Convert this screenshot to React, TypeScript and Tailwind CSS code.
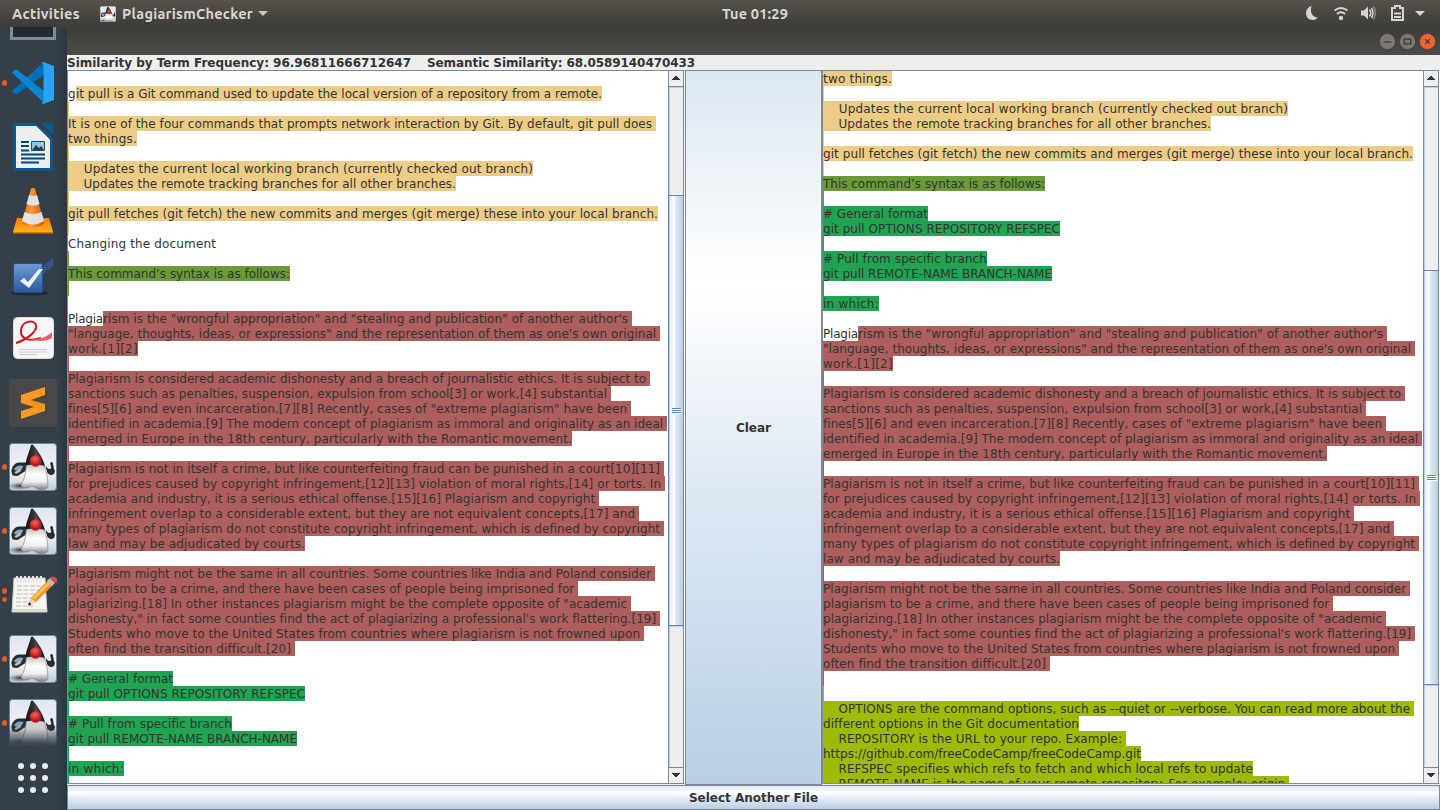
import React, { useLayoutEffect, useRef, useState } from 'react';

type Tone = 'sand' | 'moss' | 'rust' | 'green' | 'lime' | 'none';
type Line = { t: string; c: Tone; pre: string; w: number; pw: number };

const tones: Record<Tone, string> = {
  sand: 'bg-[#edcd86]',
  moss: 'bg-[#699b37]',
  rust: 'bg-[#ae5e5c]',
  green: 'bg-[#20a451]',
  lime: 'bg-[#9dba07]',
  none: '',
};

// w is the set width of the whole line, pw the width of its unmarked opening
const L = (c: Tone, w = 0, t = '', pre = '', pw = 0): Line => ({ c, t, pre, w, pw });

const updates: Line[] = [
  L('sand', 465, '    Updates the current local working branch (currently checked out branch)'),
  L('sand', 388, '    Updates the remote tracking branches for all other branches.'),
  L('sand'),
  L('sand', 590, 'git pull fetches (git fetch) the new commits and merges (git merge) these into your local branch.'),
];

const essay: Line[] = [
  L('rust', 564, 'rism is the "wrongful appropriation" and "stealing and publication" of another author\'s ', 'Plagia', 35),
  L('rust', 592, '"language, thoughts, ideas, or expressions" and the representation of them as one\'s own original '),
  L('rust', 70, 'work.[1][2]'),
  L('rust'),
  L('rust', 582, 'Plagiarism is considered academic dishonesty and a breach of journalistic ethics. It is subject to '),
  L('rust', 543, 'sanctions such as penalties, suspension, expulsion from school[3] or work,[4] substantial '),
  L('rust', 563, 'fines[5][6] and even incarceration.[7][8] Recently, cases of "extreme plagiarism" have been '),
  L('rust', 599, 'identified in academia.[9] The modern concept of plagiarism as immoral and originality as an ideal '),
  L('rust', 504, 'emerged in Europe in the 18th century, particularly with the Romantic movement.'),
  L('rust'),
  L('rust', 596, 'Plagiarism is not in itself a crime, but like counterfeiting fraud can be punished in a court[10][11] '),
  L('rust', 597, 'for prejudices caused by copyright infringement,[12][13] violation of moral rights,[14] or torts. In '),
  L('rust', 531, 'academia and industry, it is a serious ethical offense.[15][16] Plagiarism and copyright '),
  L('rust', 571, 'infringement overlap to a considerable extent, but they are not equivalent concepts,[17] and '),
  L('rust', 596, 'many types of plagiarism do not constitute copyright infringement, which is defined by copyright '),
  L('rust', 237, 'law and may be adjudicated by courts.'),
  L('rust'),
  L('rust', 587, 'Plagiarism might not be the same in all countries. Some countries like India and Poland consider '),
  L('rust', 510, 'plagiarism to be a crime, and there have been cases of people being imprisoned for '),
  L('rust', 563, 'plagiarizing.[18] In other instances plagiarism might be the complete opposite of "academic '),
  L('rust', 592, 'dishonesty," in fact some counties find the act of plagiarizing a professional\'s work flattering.[19] '),
  L('rust', 576, 'Students who move to the United States from countries where plagiarism is not frowned upon '),
  L('rust', 227, 'often find the transition difficult.[20] '),
];

const commands: Line[] = [
  L('green', 105, '# General format'),
  L('green', 237, 'git pull OPTIONS REPOSITORY REFSPEC'),
  L('green'),
  L('green', 164, '# Pull from specific branch'),
  L('green', 229, 'git pull REMOTE-NAME BRANCH-NAME'),
  L('green'),
  L('green', 56, 'in which:'),
];

const left: Line[] = [
  L('none'),
  L('sand', 534, 'it pull is a Git command used to update the local version of a repository from a remote.', 'g', 8),
  L('sand'),
  L('sand', 588, 'It is one of the four commands that prompts network interaction by Git. By default, git pull does '),
  L('sand', 69, 'two things.'),
  L('sand'),
  ...updates,
  L('sand'),
  L('none', 148, 'Changing the document'),
  L('moss'),
  L('moss', 222, 'This command’s syntax is as follows:'),
  L('moss'),
  L('none'),
  ...essay,
  L('green'),
  ...commands,
  L('green'),
];

const right: Line[] = [
  L('sand', 69, 'two things.'),
  L('sand'),
  ...updates,
  L('sand'),
  L('moss', 222, 'This command’s syntax is as follows:'),
  L('moss'),
  ...commands,
  L('none'),
  ...essay,
  L('rust'),
  L('lime'),
  L('lime', 591, '    OPTIONS are the command options, such as --quiet or --verbose. You can read more about the '),
  L('lime', 256, 'different options in the Git documentation'),
  L('lime', 303, '    REPOSITORY is the URL to your repo. Example: '),
  L('lime', 318, 'https://github.com/freeCodeCamp/freeCodeCamp.git'),
  L('lime', 430, '    REFSPEC specifies which refs to fetch and which local refs to update'),
  L('lime', 466, '    REMOTE-NAME is the name of your remote repository. For example: origin.'),
];

// Tracks its text so that it fills the given width exactly
function Run({ text, width, className = '' }: { text: string; width: number; className?: string }) {
  const ref = useRef<HTMLSpanElement>(null);
  const [gap, setGap] = useState(0);
  useLayoutEffect(() => {
    const natural = ref.current!.getBoundingClientRect().width;
    setGap((width - natural) / text.length);
  }, [text, width]);
  return (
    <span className={`block shrink-0 overflow-visible ${className}`} style={{ width }}>
      <span ref={ref} className="inline-block [font-variant-ligatures:none]" style={{ letterSpacing: gap }}>{text}</span>
    </span>
  );
}

function Doc({ lines }: { lines: Line[] }) {
  return (
    <div className="min-w-0 flex-1 overflow-hidden bg-white">
      {lines.map((l, i) => (
        <div key={i} className="flex h-[15px] whitespace-pre text-[12px] leading-[17px] text-[#333]">
          {l.pre && <Run text={l.pre} width={l.pw} />}
          {l.t ? (
            <Run text={l.t} width={l.w - l.pw} className={`h-[15px] ${tones[l.c]}`} />
          ) : (
            <span className={`w-px ${tones[l.c]}`} />
          )}
        </div>
      ))}
    </div>
  );
}

function Arrow({ down = false }: { down?: boolean }) {
  return (
    <div className={`flex h-4 shrink-0 items-center justify-center border-[#7a8a99] bg-[#eee] ${down ? 'border-t pb-px' : 'border-b pb-px'}`}>
      <svg width="8" height="4" viewBox="0 0 8 4" shapeRendering="crispEdges" className={down ? 'rotate-180' : ''}>
        <path d="M3 0h2v1h1v1h1v1h1v1H0V3h1V2h1V1h1z" fill="#333" />
      </svg>
    </div>
  );
}

function Scroll({ top, height }: { top: number; height: number }) {
  return (
    <div className="flex w-4 shrink-0 flex-col border-x border-[#7a8a99] bg-[#eee]">
      <Arrow />
      <div className="shrink-0 border-l border-t border-[#b8cfe5]" style={{ height: top }} />
      <div
        className="-ml-px flex shrink-0 flex-col items-center justify-center gap-px border-y border-l border-[#6382bf] bg-[linear-gradient(90deg,#b8cfe5_0,#b8cfe5_1px,#e6eef7_1px,#fff_35%,#dde8f3_50%,#b8cfe5)]"
        style={{ height }}
      >
        <i className="h-px w-[9px] bg-[#6382bf] shadow-[1px_1px_0_#fff]" />
        <i className="h-px w-[9px] bg-[#6382bf] shadow-[1px_1px_0_#fff]" />
        <i className="h-px w-[9px] bg-[#6382bf] shadow-[1px_1px_0_#fff]" />
      </div>
      <div className="flex-1 border-l border-t border-[#b8cfe5]" />
      <Arrow down />
    </div>
  );
}

function Dots({ n }: { n: number }) {
  return (
    <div className="flex w-[9px] shrink-0 flex-col items-center gap-[3px]">
      {Array.from({ length: n }, (_, i) => (
        <i key={i} className="size-[5.5px] rounded-full bg-[#e95420]" />
      ))}
    </div>
  );
}

function DukeArt() {
  return (
    <svg width="48" height="48" viewBox="0 0 48 48">
      <defs>
        <linearGradient id="tile" x2="0" y2="1">
          <stop stopColor="#e3e5f0" />
          <stop offset=".6" stopColor="#f3f4f9" />
          <stop offset="1" stopColor="#c6c7d6" />
        </linearGradient>
        <linearGradient id="body" x2="0" y2="1">
          <stop stopColor="#b5b5b5" />
          <stop offset=".4" stopColor="#fff" />
          <stop offset=".7" stopColor="#f0f0f0" />
          <stop offset="1" stopColor="#7d7d7d" />
        </linearGradient>
        <linearGradient id="hat">
          <stop stopColor="#161616" />
          <stop offset=".55" stopColor="#3d3d3d" />
          <stop offset="1" stopColor="#1c1c1c" />
        </linearGradient>
        <radialGradient id="nose" cx=".45" cy=".3">
          <stop stopColor="#ff5f58" />
          <stop offset=".6" stopColor="#e03436" />
          <stop offset="1" stopColor="#b51a20" />
        </radialGradient>
        <radialGradient id="shade">
          <stop stopColor="#222" stopOpacity=".85" />
          <stop offset="1" stopColor="#444" stopOpacity="0" />
        </radialGradient>
      </defs>
      <rect x=".5" y=".5" width="47" height="47" rx="3" fill="url(#tile)" stroke="#5f86a8" />
      <ellipse cx="11" cy="43" rx="12" ry="4" fill="url(#shade)" />
      <path d="M18 19.500H10C6 20 3 23 2.300 28l1.200 4.500 5 .5 8-5z" fill="#2b2b2b" />
      <path d="M5 27c1-4 5-5.500 9.500-4l-1.500 3-3 1.500z" fill="#78aee2" />
      <path d="M5.500 29.500c2-2.500 4-3 7-3l-1 2-4.500 2.500z" fill="#d5bd9a" />
      <path d="M36.500 23l3 3 2.800-.5-1-5c0-2 2.400-2 2.700 0l.8 5 1.200 2.500-1 3-3 1.200-3.500-2z" fill="#2b2b2b" />
      <path d="M17.600 20C17 27 16.500 32 14.500 37 13.500 39.500 12 41.500 12.500 43c.5 1.800 3.500 2 6 1.500 3-.5 4.500-1.300 6-.8 3 1.300 4 3.300 8 3 4-.3 6.500-1.200 6.500-3.700-.5-6-.5-13-3.500-19l-2-4z" fill="url(#body)" stroke="#858585" strokeWidth=".7" />
      <path d="M22 2c1-1 2-.5 3 1 4 5 9 12 11 20-4-1-7-1.500-10-1.500-3 0-6 0-9.500 1C17 15 20.500 8 22 2z" fill="url(#hat)" />
      <path d="M25 6.500c2.500 2 4.500 4.500 6 8l-4.500-2.500z" fill="#666" opacity=".5" />
      <circle cx="26.500" cy="18" r="5.800" fill="url(#nose)" />
    </svg>
  );
}

function CodeArt() {
  return (
    <svg width="48" height="48" viewBox="0 0 48 48">
      <path d="M3 32l4 3.500L35 16V3z" fill="#0070b8" />
      <path d="M3 13.500l4-3.500 28 22v12z" fill="#0a84d4" />
      <path d="M34 3l11 4v34l-11 4-1.500-1 2-1V5l-2-1z" fill="#2aa4f2" />
    </svg>
  );
}

function WriterArt() {
  return (
    <svg width="48" height="48" viewBox="0 0 48 48">
      <path d="M5 0h21l18 15v31q0 2-2 2H6q-2 0-2-2V2q0-2 1-2z" fill="#0b5a8d" />
      <path d="M32 0h10q2 0 2 2v10z" fill="#0b5a8d" />
      <path d="M7 3h20l14 14v28H7z" fill="#eee" />
      <path d="M27 3l14 14-3-1z" fill="#fff" />
      <path d="M12 19h8m-8 4h8m-8 4.500h8M12 31.500h24M12 35.500h24M12 39.500h18" stroke="#00477a" strokeWidth="2" />
      <path d="M22.500 18.500h13v9h-13z" fill="#8cc6ea" stroke="#06528a" />
      <path d="M23 27l4-5 3 3 2-2 3 4z" fill="#333b39" />
      <circle cx="33" cy="20.500" r="1.300" fill="#f7ce35" />
    </svg>
  );
}

function ConeArt() {
  return (
    <svg width="48" height="48" viewBox="0 0 48 48">
      <defs>
        <linearGradient id="cone">
          <stop stopColor="#ec6b00" />
          <stop offset=".4" stopColor="#ff9b32" />
          <stop offset="1" stopColor="#d94e00" />
        </linearGradient>
        <linearGradient id="base" x2="0" y2="1">
          <stop stopColor="#f77c00" />
          <stop offset="1" stopColor="#ffb41e" />
        </linearGradient>
      </defs>
      <path d="M8 31h32l4 14q0 1-1 1H5q-1 0-1-1z" fill="url(#base)" />
      <path d="M4 45h40v1.500H4z" fill="#df7200" />
      <path d="M22 1.500q2-1 4 0l9 35q-10 8-22 0z" fill="url(#cone)" />
      <path d="M20 8q4 2 8 0l2.500 9q-6 3-13 0zM15.500 25q8 4 17 0l2.500 9q-11 7-22 0z" fill="#e2e2e4" />
    </svg>
  );
}

function CheckArt() {
  return (
    <svg width="48" height="48" viewBox="0 0 48 48">
      <defs>
        <linearGradient id="check" x2="0" y2="1">
          <stop stopColor="#6d9bd5" />
          <stop offset="1" stopColor="#2b5b9d" />
        </linearGradient>
      </defs>
      <ellipse cx="21" cy="42" rx="19" ry="2.500" fill="#222a31" />
      <rect x="4.500" y="12.500" width="29" height="29" rx="2" fill="url(#check)" stroke="#204f8d" />
      <path d="M30 19L44 7v8L33 24z" fill="#335e9f" opacity=".7" />
      <path d="M11 30l4-3 4 4 11-13h4L20 37z" fill="#f2f2f2" />
    </svg>
  );
}

function PdfArt() {
  return (
    <svg width="48" height="48" viewBox="0 0 48 48">
      <rect x="4.500" y="2.500" width="40" height="41" rx="4" fill="#f6f6f6" stroke="#ddd" />
      <path d="M7 28c8-2 22-11 20-18C25 4 13 6 12 15c-1 9 8 12 20 8" fill="none" stroke="#cc1720" strokeWidth="2" />
      <path d="M20 24c8 1 17-1 23-7v6c-6 3.500-14 4-23 1z" fill="#e66067" />
      <path d="M10 34.500h28M10 37h28M10 39.500h18" stroke="#ccc" />
    </svg>
  );
}

function SublimeArt() {
  return (
    <svg width="48" height="48" viewBox="0 0 48 48">
      <rect width="48" height="48" rx="3" fill="#484848" />
      <path d="M12 16L36 8v8l-14 5 14 4v7L12 40v-8l13-4-13-4z" fill="#ff9820" />
      <path d="M25 28l11-3-14-4z" fill="#e27d0b" opacity=".35" />
    </svg>
  );
}

function NotesArt() {
  return (
    <svg width="48" height="48" viewBox="0 0 48 48">
      <path d="M5 7h31l2 34H3z" fill="#f5f5f1" stroke="#ccc" />
      <path d="M3 38h35v3H3z" fill="#d5d9ce" />
      <path d="M8 5v6m4-6v6m4-6v6m4-6v6m4-6v6m4-6v6m4-6v6" stroke="#e7e7e7" strokeWidth="2" />
      <path d="M8 15h24M8 19h22M8 23h21M7 27h16M7 31h17M7 35h17" stroke="#bbb" strokeDasharray="5 1.500" />
      <path d="M20 34l2-7L39 9l5 5-17 17z" fill="#f29427" />
      <path d="M23 27L40 10l2 2-16 16z" fill="#ffc05f" />
      <path d="M20 34l2-7 5 4z" fill="#ead4aa" />
      <path d="M19 34.500l1-3.500 2.500 2.500z" fill="#222" />
      <path d="M38 10l3-3 5 5-3 3z" fill="#bbb" />
      <path d="M41 7q3-3 6 0t0 5z" fill="#e34650" />
    </svg>
  );
}

function Tile({ dots = 0, children }: { dots?: number; children: React.ReactNode }) {
  return (
    <div className="flex h-16 shrink-0 items-center">
      <Dots n={dots} />
      {children}
    </div>
  );
}

function Dock() {
  return (
    <aside className="flex w-[67px] shrink-0 flex-col overflow-hidden bg-[linear-gradient(90deg,#343f49_0,#343f49_58px,#2d363f)]">
      <div className="ml-[10px] h-[13px] w-[46px] shrink-0 border-[3px] border-t-0 border-[#888b8e] bg-[#222a32]" />
      <div className="mt-[11px] flex flex-col">
        <Tile dots={1}><CodeArt /></Tile>
        <Tile><WriterArt /></Tile>
        <Tile><ConeArt /></Tile>
        <Tile><CheckArt /></Tile>
        <Tile><PdfArt /></Tile>
        <Tile><SublimeArt /></Tile>
        <Tile dots={1}><DukeArt /></Tile>
        <Tile dots={1}><DukeArt /></Tile>
        <Tile dots={2}><NotesArt /></Tile>
        <Tile dots={1}><DukeArt /></Tile>
        <Tile dots={1}>
          <div className="[mask-image:linear-gradient(#000_50%,transparent_98%)]"><DukeArt /></div>
        </Tile>
      </div>
      <div className="ml-[18px] mt-[8px] grid w-[30px] grid-cols-3 gap-[6px]">
        {Array.from({ length: 9 }, (_, i) => (
          <i key={i} className="size-[6px] rounded-full bg-[#eee]" />
        ))}
      </div>
    </aside>
  );
}

function TopBar() {
  return (
    <header className="flex h-[27px] shrink-0 items-center whitespace-nowrap bg-[linear-gradient(#57534b,#3d3b37)] font-['Ubuntu','Noto_Sans',sans-serif] text-[14.500px] font-semibold leading-[27px] text-[#d9d7d2]">
      <div className="flex w-[722px] items-center pl-3">
        <Run text="Activities" width={68} />
        <div className="ml-5 size-4 shrink-0 overflow-hidden [&_svg]:size-4"><DukeArt /></div>
        <div className="ml-[6px]"><Run text="PlagiarismChecker" width={131} /></div>
        <svg width="10" height="5" viewBox="0 0 10 5" className="ml-[5px]"><path d="M0 0h10L5 5z" fill="#c8c7c4" /></svg>
      </div>
      <Run text="Tue 01:29" width={66} />
      <svg width="140" height="27" viewBox="0 0 140 27" fill="#d5d4d1" className="ml-auto">
        <path d="M11.500 6C3.500 8.500 4.500 20 13 20q3 0 4.800-2.500C12.500 17.500 9.500 12 11.500 6z" />
        <g fill="none" stroke="#d5d4d1" strokeWidth="2">
          <path d="M34.500 10.500q6.500-5 13 0M37 14q4-3.500 8 0" />
          <path d="M92 8h3V6h5v2h3v12H92z" />
        </g>
        <circle cx="41" cy="18" r="2.200" />
        <path d="M61 10.500h3l4-4v13l-4-4h-3z" />
        <path d="M69.500 9.500q2.500 3.500 0 7" fill="none" stroke="#d5d4d1" strokeWidth="1.500" />
        <path d="M71.500 8q3 5 0 10" fill="none" stroke="#d5d4d1" strokeWidth="1.500" />
        <path d="M73.500 6.500q4 6.500 0 13" fill="none" stroke="#858279" strokeWidth="1.500" />
        <path d="M94 12.500h7v2h-7zM94 16h7v2h-7z" />
        <path d="M115 11h10l-5 5z" />
      </svg>
    </header>
  );
}

function TitleBar() {
  return (
    <div className="flex h-7 shrink-0 items-center justify-end gap-[3px] bg-[linear-gradient(#3d3c37,#4d4b45)] pr-1">
      {['M5 9.500h8', 'M5.500 6.500h7v5h-7z', 'M6.500 6.500l5 5M11.500 6.500l-5 5'].map((d, i) => (
        <svg key={d} width="17" height="17" viewBox="0 0 18 18">
          <circle cx="9" cy="9" r="8.500" fill={i === 2 ? '#ee6336' : '#7b7871'} stroke="#33312d" strokeWidth=".6" />
          <path d={d} fill="none" stroke="#3b3934" strokeWidth="1.300" />
        </svg>
      ))}
    </div>
  );
}

export default function App() {
  return (
    <div className="flex h-[810px] w-[1440px] flex-col overflow-hidden font-['DejaVu_Sans',sans-serif]">
      <TopBar />
      <div className="flex min-h-0 flex-1">
        <Dock />
        <main className="flex min-w-0 flex-1 flex-col bg-[#eee]">
          <TitleBar />
          <div className="flex h-[15px] shrink-0 gap-4 whitespace-pre text-[12px] font-bold leading-[17px] text-[#333]">
            <Run text="Similarity by Term Frequency: 96.96811666712647" width={344} />
            <Run text="Semantic Similarity: 68.0589140470433" width={268} />
          </div>
          <div className="flex h-[714px] shrink-0">
            <section className="flex w-[618px] shrink-0 border border-[#7a8a99] border-r-white">
              <Doc lines={left} />
              <Scroll top={108} height={431} />
            </section>
            <button className="-mb-px w-[137px] shrink-0 border border-[#7a8a99] bg-[linear-gradient(#dde8f3,#fff_30%,#dde8f3_60%,#b8cfe5)] text-[12px] font-bold text-[#333]">Clear</button>
            <section className="flex min-w-0 flex-1 border border-[#7a8a99] border-r-white">
              <Doc lines={right} />
              <Scroll top={183} height={415} />
            </section>
          </div>
          <button className="mt-px h-[25px] shrink-0 border border-[#7a8a99] bg-[linear-gradient(#dde8f3,#fff_30%,#dde8f3_60%,#b8cfe5)] pt-px text-[12px] font-bold leading-[23px] text-[#333]">Select Another File</button>
        </main>
      </div>
    </div>
  );
}
